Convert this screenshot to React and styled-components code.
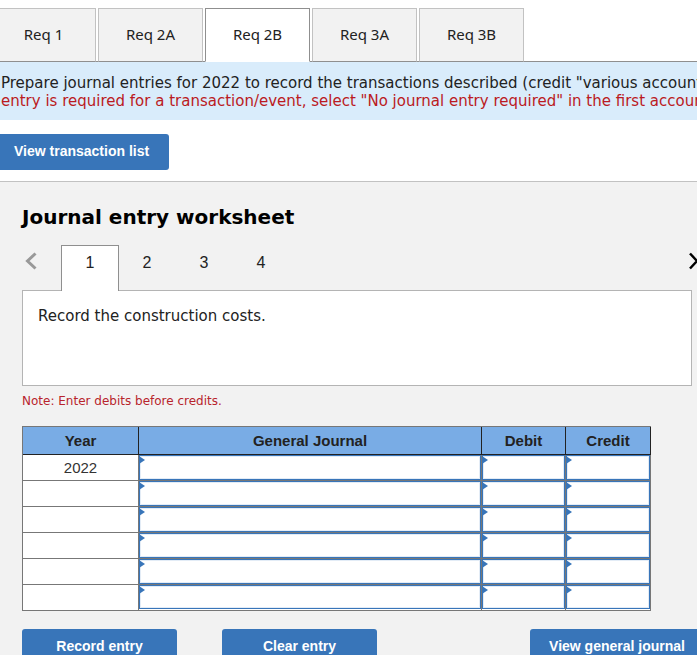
import React, { useState } from "react";
import styled, { createGlobalStyle } from "styled-components";

const GlobalStyle = createGlobalStyle`
    * {
        box-sizing: border-box;
    }
    body {
        margin: 0;
        background: #fff;
        font-family: "DejaVu Sans", Verdana, sans-serif;
        color: #111;
    }
`;

const Page = styled.div`
    height: 100vh;
    display: flex;
    flex-direction: column;
    overflow: hidden;
`;

const ReqTabs = styled.nav`
    display: flex;
    gap: 2px;
    height: 62px;
    flex-shrink: 0;
    margin-left: -9px;
    padding-top: 8px;
    box-shadow: inset 0 -1px #8f8f8f;
`;

const ReqTab = styled.button`
    width: 105px;
    padding: 0 0 2px;
    font-family: "Noto Sans", sans-serif;
    font-size: 15px;
    color: #222;
    background: ${props => props.$active ? "#fff" : "#f2f2f2"};
    border: 1px solid ${props => props.$active ? "#8f8f8f" : "#c2c2c2"};
    border-bottom-color: ${props => props.$active ? "#fff" : "#8f8f8f"};
`;

const Instructions = styled.p`
    margin: 0;
    padding: 12px 1px 10px;
    flex-shrink: 0;
    background: #d9ecfb;
    font-size: 15px;
    line-height: 18px;
    white-space: nowrap;
    color: #222;
`;

const Warning = styled.span`
    display: block;
    color: #bb1a22;
`;

const Toolbar = styled.div`
    display: flex;
    flex-shrink: 0;
    padding: 14px 0 11px;
`;

const Button = styled.button`
    height: 36px;
    min-width: ${props => props.$wide ? "174px" : "155px"};
    padding: 0 10px 2px;
    border: 0;
    border-radius: 3px;
    background: #3875b9;
    color: #fff;
    font-family: "Liberation Sans", Arial, sans-serif;
    font-size: 14px;
    font-weight: bold;
    white-space: nowrap;
`;

const ListButton = styled(Button)`
    padding: 0 20px 2px 14px;
    border-radius: 0 3px 3px 0;
`;

const Worksheet = styled.main`
    flex: 1 0 auto;
    padding: 22px 5px 10px 22px;
    border-top: 1px solid #c2c2c2;
    background: #f2f2f2;
`;

const Title = styled.h1`
    margin: 0;
    font-size: 20px;
    line-height: 26px;
    color: #000;
`;

const Pager = styled.div`
    display: flex;
    justify-content: space-between;
    height: 46px;
    margin: 15px -12px -1px 0;
    position: relative;
`;

const PageTabs = styled.div`
    display: flex;
`;

const Arrow = styled.button`
    width: ${props => props.$next ? "18px" : "39px"};
    padding: 0 0 14px 2px;
    display: flex;
    align-items: center;
    border: 0;
    background: none;
    color: ${props => props.$next ? "#000" : "#999"};
    svg {
        flex-shrink: 0;
    }
`;

const PageTab = styled.button`
    width: 58px;
    margin-right: -1px;
    padding: 0 0 12px;
    border: 1px solid ${props => props.$active ? "#8f8f8f" : "transparent"};
    border-bottom: 0;
    background: ${props => props.$active ? "#fff" : "transparent"};
    font-family: "Liberation Sans", Arial, sans-serif;
    font-size: 16px;
    color: #222;
`;

const Task = styled.div`
    height: 96px;
    padding: 16px 15px;
    border: 1px solid #b4b4b4;
    background: #fff;
    font-size: 15px;
    line-height: 18px;
    color: #222;
`;

const Note = styled.p`
    margin: 7px 0 16px;
    font-size: 12px;
    line-height: 17px;
    color: #b8242c;
`;

const TableWrap = styled.div`
    padding-right: 41px;
`;

const Table = styled.table`
    width: 100%;
    table-layout: fixed;
    border-collapse: separate;
    border-spacing: 0;
    border: solid #777;
    border-width: 1px 0 0 1px;
    background: #fff;
    font-family: "Liberation Sans", Arial, sans-serif;
    font-size: 15px;
    color: #333;
`;

const HeadCell = styled.th`
    width: ${props => props.$width || "auto"};
    height: 28px;
    padding: 0;
    border: solid #222;
    border-width: 0 1px 1px 0;
    background: #79ace5;
    color: #222;
`;

const Cell = styled.td`
    position: relative;
    height: 26px;
    padding: 0;
    border: solid #777;
    border-width: 0 1px 1px 0;
    text-align: center;
    vertical-align: top;
    line-height: 25px;
`;

const Entry = styled.input`
    display: block;
    width: 100%;
    height: 25px;
    padding: 0 10px;
    border: 1px solid #3875b9;
    border-radius: 0;
    outline: 0;
    background: #fff;
    box-shadow: inset 0 0 0 1px #e3ecf6;
    font: inherit;
    tr:last-child & {
        height: 24px;
    }
`;

// little marker in the corner of an editable cell
const Flag = styled.svg`
    position: absolute;
    left: 0;
    top: 1px;
    width: 6px;
    height: 8px;
    fill: #3875b9;
    pointer-events: none;
`;

const Actions = styled.div`
    display: flex;
    justify-content: space-between;
    margin: 18px -12px 0 0;
`;

const ActionGroup = styled.div`
    display: flex;
    gap: 45px;
`;

const requirements = ["Req 1", "Req 2A", "Req 2B", "Req 3A", "Req 3B"];
const pages = [1, 2, 3, 4];
const rows = ["2022", "", "", "", "", ""];
const fields = ["General Journal", "Debit", "Credit"];

export default () => {
    const [req, setReq] = useState("Req 2B");
    const [page, setPage] = useState(1);

    return (
        <Page>
            <GlobalStyle />
            <ReqTabs>
                {requirements.map(name => (
                    <ReqTab key={name} $active={name === req} onClick={() => setReq(name)}>{name}</ReqTab>
                ))}
            </ReqTabs>
            <Instructions>
                Prepare journal entries for 2022 to record the transactions described (credit "various accounts"
                <Warning>entry is required for a transaction/event, select "No journal entry required" in the first account</Warning>
            </Instructions>
            <Toolbar>
                <ListButton>View transaction list</ListButton>
            </Toolbar>
            <Worksheet>
                <Title>Journal entry worksheet</Title>
                <Pager>
                    <PageTabs>
                        <Arrow aria-label="Previous" onClick={() => setPage(Math.max(1, page - 1))}>
                            <svg width="14" height="18" viewBox="0 0 14 18" fill="none" stroke="currentColor" strokeWidth="3">
                                <path d="M11.500 1.500L3.500 9L11.500 16.500" />
                            </svg>
                        </Arrow>
                        {pages.map(n => (
                            <PageTab key={n} $active={n === page} onClick={() => setPage(n)}>{n}</PageTab>
                        ))}
                    </PageTabs>
                    <Arrow $next aria-label="Next" onClick={() => setPage(Math.min(4, page + 1))}>
                        <svg width="14" height="18" viewBox="0 0 14 18" fill="none" stroke="currentColor" strokeWidth="2.500">
                            <path d="M2 1.500L9 9L2 16.500" />
                        </svg>
                    </Arrow>
                </Pager>
                <Task>Record the construction costs.</Task>
                <Note>Note: Enter debits before credits.</Note>
                <TableWrap>
                    <Table>
                        <thead>
                            <tr>
                                <HeadCell $width="116px">Year</HeadCell>
                                <HeadCell>General Journal</HeadCell>
                                <HeadCell $width="84px">Debit</HeadCell>
                                <HeadCell $width="85px">Credit</HeadCell>
                            </tr>
                        </thead>
                        <tbody>
                            {rows.map((year, i) => (
                                <tr key={i}>
                                    <Cell>{year}</Cell>
                                    {fields.map(field => (
                                        <Cell key={field}>
                                            <Entry aria-label={`${field}, line ${i + 1}`} />
                                            <Flag viewBox="0 0 6 8"><path d="M0 0L6 4L0 8Z" /></Flag>
                                        </Cell>
                                    ))}
                                </tr>
                            ))}
                        </tbody>
                    </Table>
                </TableWrap>
                <Actions>
                    <ActionGroup>
                        <Button>Record entry</Button>
                        <Button>Clear entry</Button>
                    </ActionGroup>
                    <Button $wide>View general journal</Button>
                </Actions>
            </Worksheet>
        </Page>
    );
};
